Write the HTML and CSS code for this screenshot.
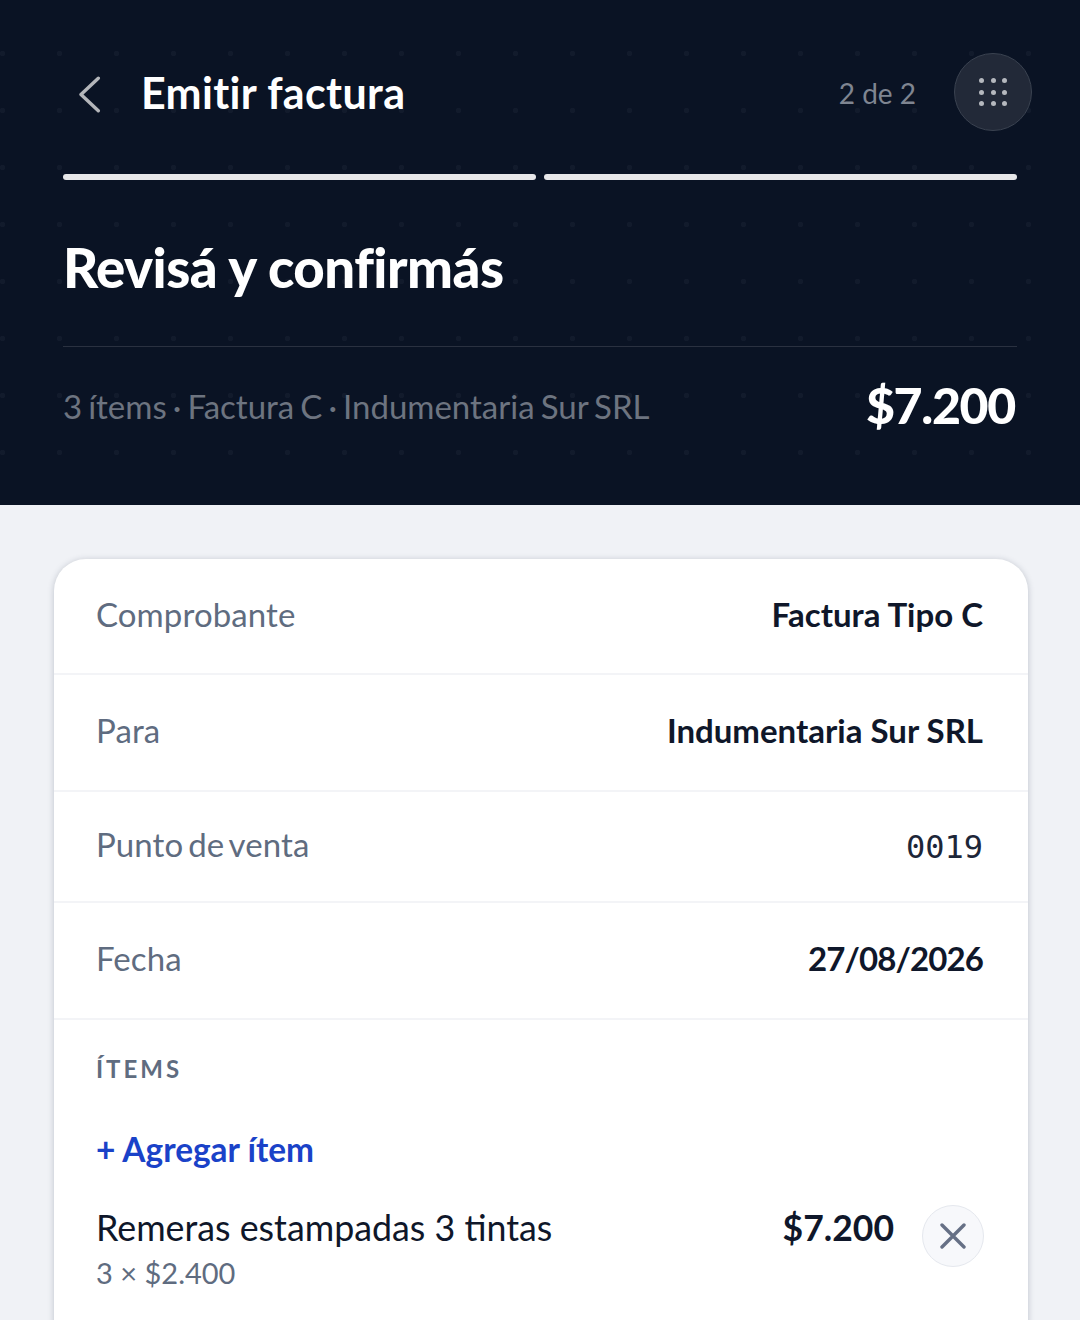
FILE: index.html
```html
<!DOCTYPE html>
<html lang="es">

<head>
  <meta charset="UTF-8">
  <meta name="viewport" content="width=device-width, initial-scale=1.0">
  <title>Emitir factura</title>
  <link rel="stylesheet" href="styles.css">
</head>

<body>
  <header class="hero">
    <div class="topbar">
      <button class="back-btn" aria-label="Volver">
        <svg width="24" height="42" viewBox="0 0 24 42">
          <path d="M20.3 7.2 3 23.5 20.3 39.8" fill="none" stroke="#b4b6ba" stroke-width="3.4" stroke-linecap="round" stroke-linejoin="round" />
        </svg>
      </button>
      <h1 class="topbar-title">Emitir factura</h1>
      <span class="step-count">2 de 2</span>
      <button class="menu-btn" aria-label="Menú">
        <span class="menu-dots">
          <i></i><i></i><i></i><i></i><i></i><i></i><i></i><i></i><i></i>
        </span>
      </button>
    </div>

    <div class="progress">
      <span></span>
      <span></span>
    </div>

    <h2 class="hero-title">Revisá y confirmás</h2>

    <div class="summary">
      <span class="summary-text">3 ítems · Factura C · Indumentaria Sur SRL</span>
      <span class="summary-total">$7.200</span>
    </div>
  </header>

  <main class="content">
    <section class="card">
      <div class="row">
        <span class="row-label">Comprobante</span>
        <span class="row-value">Factura Tipo C</span>
      </div>
      <div class="row">
        <span class="row-label">Para</span>
        <span class="row-value">Indumentaria Sur SRL</span>
      </div>
      <div class="row row-short">
        <span class="row-label">Punto de venta</span>
        <span class="row-value mono">0019</span>
      </div>
      <div class="row">
        <span class="row-label">Fecha</span>
        <span class="row-value date">27/08/2026</span>
      </div>

      <div class="items">
        <h3 class="items-title">ÍTEMS</h3>
        <a class="add-item" href="#">+ Agregar ítem</a>

        <div class="item">
          <div class="item-info">
            <div class="item-name">Remeras estampadas 3 tintas</div>
            <div class="item-qty">3 × $2.400</div>
          </div>
          <span class="item-price">$7.200</span>
          <button class="remove-btn" aria-label="Quitar">
            <svg width="26" height="26" viewBox="0 0 26 26">
              <path d="M2 2 24 24M24 2 2 24" fill="none" stroke="#667085" stroke-width="3.4" stroke-linecap="round" />
            </svg>
          </button>
        </div>
      </div>
    </section>
  </main>
</body>

</html>
```

FILE: styles.css
```css
* {
  box-sizing: border-box;
}

html,
body {
  height: 100%;
}

body {
  margin: 0;
  height: 1320px;
  overflow: hidden;
  font-family: "Lato", sans-serif;
  background-color: #f0f2f6;
  color: #0f172a;
}

button {
  padding: 0;
  border: none;
  background: none;
}

/* Dark header */
.hero {
  height: 505px;
  padding: 53px 48px 0 63px;
  background-color: #0a1324;
  background-image: radial-gradient(circle, #121b2c 2.5px, transparent 3px);
  background-size: 57px 57px;
  background-position: 31px 25px;
}

.topbar {
  display: flex;
  align-items: center;
  height: 78px;
}

.back-btn {
  display: flex;
  width: 78px;
  padding-left: 15px;
}

.topbar-title {
  flex: 1;
  margin: 0;
  font-size: 43px;
  font-weight: 700;
  letter-spacing: 0.35px;
  color: #fff;
}

.step-count {
  margin-right: 38px;
  padding-top: 2px;
  font-size: 28px;
  color: #7f8591;
}

.menu-btn {
  display: flex;
  align-items: center;
  justify-content: center;
  width: 78px;
  height: 78px;
  border: 1px solid #3a4250;
  border-radius: 50%;
  background-color: #222938;
}

.menu-dots {
  display: grid;
  grid-template-columns: repeat(3, 5px);
  gap: 6.7px;
}

.menu-dots i {
  width: 5px;
  height: 5px;
  border-radius: 50%;
  background-color: #b5b8be;
}

.progress {
  display: flex;
  gap: 8px;
  margin: 43px 15px 0 0;
}

.progress span {
  flex: 1;
  height: 6px;
  border-radius: 3px;
  background-color: #e7e7e9;
}

.hero-title {
  margin: 54px 0 0;
  font-size: 54.5px;
  line-height: 66px;
  font-weight: 900;
  letter-spacing: -0.5px;
  color: #fff;
}

.summary {
  display: flex;
  align-items: center;
  justify-content: space-between;
  height: 116px;
  margin: 46px 15px 0 0;
  border-top: 1px solid #2a3140;
}

.summary-text {
  padding-top: 2px;
  font-size: 33px;
  word-spacing: -2.4px;
  color: #6d7480;
}

.summary-total {
  margin-right: 2px;
  font-size: 50px;
  font-weight: 900;
  letter-spacing: -1.3px;
  color: #fff;
}

/* Review card */
.content {
  padding: 54px 52px 0 54px;
}

.card {
  height: 800px;
  border-radius: 32px;
  background-color: #fff;
  box-shadow: 0 1px 6px rgba(40, 50, 75, 0.25);
}

.row {
  display: flex;
  align-items: center;
  justify-content: space-between;
  height: 117px;
  padding: 0 45px 6px 42px;
  border-bottom: 2px solid #f3f4f7;
}

.row:first-child {
  height: 116px;
  padding-bottom: 4px;
}

.row-short {
  height: 111px;
}

.row-label {
  font-size: 33px;
  letter-spacing: 0.1px;
  word-spacing: -3.5px;
  color: #5f6c80;
}

.row-value {
  font-size: 33px;
  font-weight: 700;
  color: #0f172a;
}

.date {
  letter-spacing: -0.9px;
}

.mono {
  margin-top: 6px;
  font-family: "DejaVu Sans Mono", monospace;
  font-size: 32px;
  font-weight: 400;
  color: #1d2638;
}

.items {
  padding: 34px 44px 0 42px;
}

.items-title {
  margin: 0;
  font-size: 24px;
  line-height: 30px;
  font-weight: 700;
  letter-spacing: 3px;
  color: #5f6c80;
}

.add-item {
  display: block;
  margin-top: 45px;
  font-size: 33.4px;
  line-height: 40px;
  font-weight: 700;
  color: #1a42c8;
  text-decoration: none;
}

.item {
  display: flex;
  align-items: flex-start;
  margin-top: 36px;
}

.item-info {
  flex: 1;
}

.item-name {
  font-size: 35.8px;
  line-height: 46px;
  color: #0f172a;
}

.item-qty {
  margin-top: 2px;
  font-size: 29px;
  line-height: 40px;
  color: #5f6c80;
}

.item-price {
  margin-right: 28px;
  font-size: 35.5px;
  line-height: 46px;
  font-weight: 700;
}

.remove-btn {
  display: flex;
  align-items: center;
  justify-content: center;
  width: 62px;
  height: 62px;
  border: 1px solid #e5e8ee;
  border-radius: 50%;
  background-color: #f7f8fb;
}
```
